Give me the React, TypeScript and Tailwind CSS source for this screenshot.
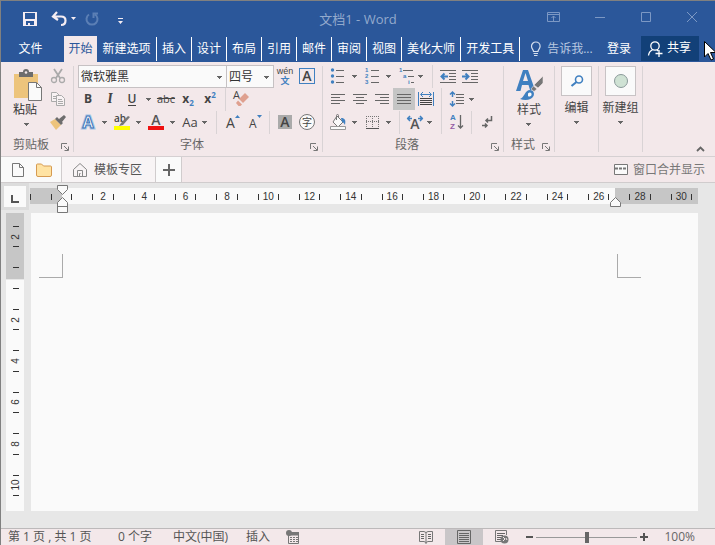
import type { ReactNode } from "react";
import clsx from "clsx";

const menuTabs = ["插入", "设计", "布局", "引用", "邮件", "审阅", "视图", "美化大师", "开发工具"];

const horizontalMarks = ["", "2", "4", "6", "8", "10", "12", "14", "16", "18", "20", "22", "24", "26", "28", "30"];
const verticalMarks = ["2", "", "2", "4", "6", "8", "10"];

const BLUE = "#4080c0";
const GRAY = "#666666";
const SMALL_FONT = "Liberation Sans";

function Lines({ rows, color = GRAY }: { rows: [number, number, number][]; color?: string }) {
  return (
    <>
      {rows.map(([x, y, w], i) => (
        <rect key={i} x={x} y={y} width={w} height="1" fill={color} />
      ))}
    </>
  );
}

function Svg({ children, w = 16, h = 16 }: { children: ReactNode; w?: number; h?: number }) {
  return (
    <svg width={w} height={h} viewBox={`0 0 ${w} ${h}`} fill="none" className="shrink-0 overflow-visible" aria-hidden="true">
      {children}
    </svg>
  );
}

function Tool({ label, active, children }: { label: string; active?: boolean; children: ReactNode }) {
  return (
    <button
      type="button"
      aria-label={label}
      className={clsx("flex h-[22px] w-[22px] shrink-0 items-center justify-center leading-4", active && "bg-[#c5c5c5]")}
    >
      {children}
    </button>
  );
}

function Caret({ label, narrow }: { label: string; narrow?: boolean }) {
  return (
    <button
      type="button"
      aria-label={label}
      className={clsx("flex h-[22px] shrink-0 items-center justify-center", narrow ? "w-2" : "w-3")}
    >
      <CaretIcon />
    </button>
  );
}

function CaretIcon() {
  return (
    <Svg w={6} h={4}>
      <path d="M0 1h5v1H4v1H3v1H2V3H1V2H0z" fill={GRAY} />
    </Svg>
  );
}

function Divider({ className }: { className?: string }) {
  return <span className={clsx("h-[23px] w-px shrink-0 bg-[#d9d3d5]", className)} />;
}

function GroupDivider() {
  return <div className="mt-1 mb-1 w-px shrink-0 bg-[#d9d3d5]" />;
}

function Row({ className, children }: { className?: string; children: ReactNode }) {
  return <div className={clsx("flex h-[23px] items-start", className)}>{children}</div>;
}

function GroupLabel({ text }: { text: string }) {
  return (
    <div className="flex h-[22px] items-center pr-1 text-[#666]">
      <span className="flex-1 text-center">{text}</span>
      <button type="button" aria-label={`${text}选项`} className="mt-1">
        <Svg w={8} h={8}>
          <path d="M.5 6V.5H6M3 3l4 4M7.5 3.5v4h-4" stroke="#777" />
        </Svg>
      </button>
    </div>
  );
}

function TitleBar() {
  return (
    <div className="grid h-[35px] grid-cols-[1fr_auto_1fr] items-center">
      <div className="flex items-center pl-[21px]">
        <button type="button" aria-label="保存">
          <Svg>
            <path d="M1 1h14v14H1z" fill="#f5edf3" />
            <path d="M3 2h10v6H3zM4 10h8v4H8v-2H6v2H4z" fill="#2b579a" />
          </Svg>
        </button>
        <button type="button" aria-label="撤消" className="ml-[13px]">
          <Svg>
            <path d="M6 1L2 5.5 7 9M2.5 5.5H10c3.500 0 4.500 2.300 4.500 4 0 2.500-1.500 4.500-4.500 4.500" stroke="#f5edf3" strokeWidth="2.200" />
          </Svg>
        </button>
        <button type="button" aria-label="撤消列表" className="ml-1">
          <Svg w={5} h={3}>
            <path d="M0 0h5L2.500 3z" fill="#f5edf3" />
          </Svg>
        </button>
        <button type="button" aria-label="恢复" className="ml-2">
          <Svg>
            <path d="M5 3.500A5.500 5.500 0 1 0 11 3.500M9.500 7V2.500H14" stroke="#5b7fb5" strokeWidth="2" />
          </Svg>
        </button>
        <button type="button" aria-label="自定义快速访问工具栏" className="mt-1 ml-[18px]">
          <Svg w={5} h={6}>
            <path d="M0 0h5v1H0zM0 3h5L2.500 6z" fill="#f5edf3" />
          </Svg>
        </button>
      </div>
      <h1 className="pt-0.5 text-[13px] text-[#93aacd]">文档1 - Word</h1>
      <div className="flex items-center justify-end gap-[30px] pr-[15px] pb-1">
        <button type="button" aria-label="功能区显示选项">
          <Svg>
            <path d="M1.500 3.500h12v9h-12zM1.500 5.500h12M7.500 12V7M5.500 9l2-2 2 2" stroke="#7c98c4" />
          </Svg>
        </button>
        <button type="button" aria-label="最小化">
          <Svg>
            <path d="M3 8.500h10" stroke="#7c98c4" />
          </Svg>
        </button>
        <button type="button" aria-label="最大化">
          <Svg>
            <path d="M3.500 3.500h9v9h-9z" stroke="#7c98c4" />
          </Svg>
        </button>
        <button type="button" aria-label="关闭">
          <Svg>
            <path d="M3 3l10 10M13 3L3 13" stroke="#7c98c4" />
          </Svg>
        </button>
      </div>
    </div>
  );
}

function MenuBar() {
  return (
    <div className="flex h-[26px] whitespace-nowrap text-white">
      <button type="button" className="w-[63px] shrink-0 pr-1">文件</button>
      <nav className="flex shrink-0">
        <button type="button" className="w-[33px] bg-[#f3e8ea] text-[#2b579a]">开始</button>
        <button type="button" className="my-px w-[60px] border-r border-white">新建选项</button>
        {menuTabs.map((tab) => (
          <button key={tab} type="button" className="my-px border-r border-white px-[5px]">
            {tab}
          </button>
        ))}
      </nav>
      <label className="ml-[9px] flex min-w-0 items-center gap-1 text-[#b9c9e1]">
        <Svg w={14}>
          <path
            d="M4.500 10.500C4.500 8.500 2.500 8 2.500 5.300a4.300 4.300 0 0 1 8.600 0C11.100 8 9 8.500 9 10.500zM4.500 12.500H9M5 14.500h3.500"
            stroke="#d5dfee"
            strokeWidth="1.200"
          />
        </Svg>
        <input
          type="text"
          aria-label="操作说明搜索"
          placeholder="告诉我..."
          className="w-[54px] min-w-0 bg-transparent outline-none placeholder:text-[#b9c9e1]"
        />
      </label>
      <div className="ml-auto flex shrink-0">
        <button type="button" className="w-11">登录</button>
        <button type="button" className="mr-4 mb-px flex w-[58px] items-center gap-[3px] bg-[#124078] pl-1.5">
          <Svg w={17} h={17}>
            <circle cx="8" cy="6" r="4.200" stroke="white" strokeWidth="1.300" />
            <path d="M1.500 15.500c.4-3 2-5 4-5.700M10 10l1 1M8.500 13.500h7M12 10v7" stroke="white" strokeWidth="1.300" />
          </Svg>
          <span className="pb-0.5">共享</span>
        </button>
      </div>
    </div>
  );
}

function ClipboardGroup() {
  return (
    <section className="flex w-[72px] shrink-0 flex-col pt-[3px]">
      <div className="flex h-[69px] justify-between pr-1 pl-3">
        <button type="button" className="flex flex-col items-start pt-1">
          <Svg w={30} h={33}>
            <path d="M1 5h24v24H1z" fill="#edc47c" />
            <path d="M6 3h4a3 3 0 0 1 6 0h4v5H6z" fill="#6d6d6d" />
            <circle cx="13" cy="3.500" r="1.300" fill="#f3e8ea" />
            <path d="M15.500 13.500h8l5 5v13h-13z" fill="#fafafa" stroke="#777" />
            <path d="M23.500 13.500v5h5" stroke="#777" />
          </Svg>
          <span className="leading-4 text-[#333]">粘贴</span>
          <span className="mt-1 ml-[11px]">
            <CaretIcon />
          </span>
        </button>
        <div className="flex flex-col gap-px">
          <Tool label="剪切">
            <Svg>
              <path d="M4 1l6 9M12 1L6 10" stroke="#aaa" strokeWidth="1.800" />
              <circle cx="4" cy="12" r="2.500" stroke="#aaa" strokeWidth="1.300" />
              <circle cx="12" cy="12" r="2.500" stroke="#aaa" strokeWidth="1.300" />
            </Svg>
          </Tool>
          <Tool label="复制">
            <Svg>
              <path d="M1.500 1.500h5l3 3v6h-8z" fill="#f8f2f3" stroke="#aaa" />
              <path d="M6.500 4.500h5l3 3v7h-8z" fill="#f8f2f3" stroke="#aaa" />
              <Lines rows={[[3, 5, 3], [3, 7, 3], [8, 8, 4], [8, 10, 5], [8, 12, 5]]} color="#aaa" />
            </Svg>
          </Tool>
          <Tool label="格式刷">
            <Svg>
              <path d="M0 8l5-3 6 6-5 5z" fill="#edc47c" />
              <path d="M5 5l2-2 6 6-2 2zM9 5l5-4 2 2-4 5z" fill="#6d6d6d" />
            </Svg>
          </Tool>
        </div>
      </div>
      <GroupLabel text="剪贴板" />
    </section>
  );
}

function SelectBox({ label, value, className }: { label: string; value: string; className: string }) {
  return (
    <label className={clsx("relative flex h-[23px] items-center", className)}>
      <select
        aria-label={label}
        className="h-full w-full appearance-none border border-[#c6c1c3] bg-[#fafafa] pl-0.5 text-[#333] outline-none"
      >
        <option>{value}</option>
      </select>
      <span className="pointer-events-none absolute right-1">
        <CaretIcon />
      </span>
    </label>
  );
}

function FontGroup() {
  return (
    <section className="flex w-[248px] shrink-0 flex-col pt-[3px] text-[#444]">
      <Row className="pl-1">
        <SelectBox label="字体" value="微软雅黑" className="w-[149px]" />
        <SelectBox label="字号" value="四号" className="-ml-px w-[48px]" />
        <Tool label="拼音指南">
          <Svg w={18} h={18}>
            <text x="9" y="7" fontSize="9" fontFamily={SMALL_FONT} textAnchor="middle" fill="#444">wén</text>
            <text x="9" y="17" fontSize="9" fontWeight="700" textAnchor="middle" fill={BLUE}>文</text>
          </Svg>
        </Tool>
        <Tool label="字符边框">
          <span className="flex h-4 w-4 items-center justify-center border border-[#4080c0] text-sm font-semibold">A</span>
        </Tool>
      </Row>
      <Row className="pl-[3px]">
        <Tool label="加粗"><b>B</b></Tool>
        <Tool label="倾斜"><i className="font-serif text-sm font-semibold">I</i></Tool>
        <Tool label="下划线"><span className="border-b border-[#444] font-semibold leading-3">U</span></Tool>
        <Caret label="下划线样式" />
        <Tool label="删除线"><s className="text-[11px]">abc</s></Tool>
        <Tool label="下标">
          <b>x</b><span className="mt-2 text-[8px] font-bold text-[#4080c0]">2</span>
        </Tool>
        <Tool label="上标">
          <b>x</b><span className="mb-2 text-[8px] font-bold text-[#4080c0]">2</span>
        </Tool>
        <Divider className="mx-1" />
        <Tool label="清除所有格式">
          <Svg>
            <text x="0" y="8" fontSize="11" fill="#444">A</text>
            <path d="M6 8l6-6 4 4-6 6z" fill="#dfa08f" />
            <path d="M5 9.500l4 4-1.500 1.500h-2L3 12z" fill="#dfa08f" />
          </Svg>
        </Tool>
      </Row>
      <Row className="pl-[3px]">
        <Tool label="文本效果">
          <Svg w={18} h={18}>
            <text x="9" y="15" fontSize="16" fontWeight="700" textAnchor="middle" fill="#fafafa" stroke="#a9c6e6" strokeWidth="3">A</text>
            <text x="9" y="15" fontSize="16" fontWeight="700" textAnchor="middle" fill="#fafafa" stroke="#3b74b8" strokeWidth="1">A</text>
          </Svg>
        </Tool>
        <Caret label="文本效果列表" />
        <Tool label="突出显示">
          <Svg>
            <text x="0" y="8" fontSize="10" fontWeight="600" fill="#444">ab</text>
            <path d="M14 2l2 1-7 8-4 1 2-3z" fill="#777" />
            <path d="M0 12h16v4H0z" fill="#ffff00" />
          </Svg>
        </Tool>
        <Caret label="突出显示颜色" />
        <Tool label="字体颜色">
          <Svg>
            <text x="8" y="11" fontSize="14" fontWeight="600" textAnchor="middle" fill="#555">A</text>
            <path d="M0 12h16v4H0z" fill="#ee1111" />
          </Svg>
        </Tool>
        <Caret label="字体颜色列表" />
        <Tool label="更改大小写"><span className="text-[13px]">Aa</span></Tool>
        <Caret label="大小写列表" narrow />
        <Divider className="mr-[5px] ml-[7px]" />
        <Tool label="增大字号">
          <Svg>
            <text x="1" y="14" fontSize="14" fontWeight="500" fill="#444">A</text>
            <path d="M10 4l2.500-3L15 4z" fill={BLUE} />
          </Svg>
        </Tool>
        <Tool label="缩小字号">
          <Svg>
            <text x="2" y="14" fontSize="12" fontWeight="500" fill="#444">A</text>
            <path d="M10 1h5l-2.500 3z" fill={BLUE} />
          </Svg>
        </Tool>
        <Divider className="mr-1 ml-[3px]" />
        <Tool label="字符底纹">
          <span className="flex h-3.5 w-3.5 items-center justify-center bg-[#aaa] text-sm font-semibold">A</span>
        </Tool>
        <Tool label="带圈字符">
          <span className="flex h-4 w-4 items-center justify-center rounded-full border border-[#777] bg-[#fafafa] text-[10px]">字</span>
        </Tool>
      </Row>
      <GroupLabel text="字体" />
    </section>
  );
}

function ParagraphGroup() {
  return (
    <section className="flex w-[180px] shrink-0 flex-col pt-[3px]">
      <Row className="pl-1">
        <Tool label="项目符号">
          <Svg>
            {[2, 8, 14].map((y) => (
              <circle key={y} cx="2.500" cy={y} r="1.700" fill={BLUE} />
            ))}
            <Lines rows={[[6, 2, 8], [6, 8, 8], [6, 14, 8]]} />
          </Svg>
        </Tool>
        <Caret label="项目符号库" />
        <Tool label="编号">
          <Svg>
            {["1", "2", "3"].map((n, i) => (
              <text key={n} x="1" y={4 + i * 6} fontSize="6" fontFamily={SMALL_FONT} fontWeight="700" fill={BLUE}>{n}</text>
            ))}
            <Lines rows={[[7, 2, 8], [7, 8, 8], [7, 14, 8]]} />
          </Svg>
        </Tool>
        <Caret label="编号库" />
        <Tool label="多级列表">
          <Svg>
            <text x="1" y="4" fontSize="6" fontFamily={SMALL_FONT} fontWeight="700" fill={BLUE}>1</text>
            <text x="5" y="10" fontSize="6" fontFamily={SMALL_FONT} fontWeight="700" fill={BLUE}>a</text>
            <text x="10" y="16" fontSize="6" fontFamily={SMALL_FONT} fontWeight="700" fill={BLUE}>i</text>
            <Lines rows={[[5, 2, 10], [10, 8, 6], [13, 14, 3]]} />
          </Svg>
        </Tool>
        <Caret label="多级列表库" narrow />
        <Divider className="mr-1 ml-[7px]" />
        <Tool label="减少缩进量">
          <Svg>
            <Lines rows={[[0, 2, 16], [9, 5, 7], [9, 8, 7], [9, 11, 7], [0, 14, 16]]} />
            <path d="M8 8.500H2M4.500 5.500l-3 3 3 3" stroke={BLUE} strokeWidth="2" />
          </Svg>
        </Tool>
        <Tool label="增加缩进量">
          <Svg>
            <Lines rows={[[0, 2, 16], [9, 5, 7], [9, 8, 7], [9, 11, 7], [0, 14, 16]]} />
            <path d="M0 8.500h6M3.500 5.500l3 3-3 3" stroke={BLUE} strokeWidth="2" />
          </Svg>
        </Tool>
      </Row>
      <Row className="pl-1">
        <Tool label="左对齐">
          <Svg>
            <Lines rows={[[1, 3, 14], [1, 6, 9], [1, 9, 14], [1, 12, 9]]} />
          </Svg>
        </Tool>
        <Tool label="居中">
          <Svg>
            <Lines rows={[[1, 3, 14], [4, 6, 8], [1, 9, 14], [4, 12, 8]]} />
          </Svg>
        </Tool>
        <Tool label="右对齐">
          <Svg>
            <Lines rows={[[1, 3, 14], [6, 6, 9], [1, 9, 14], [6, 12, 9]]} />
          </Svg>
        </Tool>
        <Tool label="两端对齐" active>
          <Svg>
            <Lines rows={[[1, 3, 14], [1, 6, 14], [1, 9, 14], [1, 12, 14]]} />
          </Svg>
        </Tool>
        <Tool label="分散对齐">
          <Svg>
            <path d="M.5 1v14M15.500 1v14M3 3.500h10M5 1L2.500 3.500 5 6M11 1l2.500 2.500L11 6" stroke={BLUE} />
            <Lines rows={[[2, 7, 12], [2, 9, 12], [2, 11, 12], [2, 13, 12]]} color="#444" />
          </Svg>
        </Tool>
        <Divider className="mx-1" />
        <Tool label="行和段落间距">
          <Svg>
            <path d="M3.500 1v5M3.500 10v5M1 3.500L3.500 1 6 3.500M1 12.500L3.500 15 6 12.500" stroke={BLUE} strokeWidth="1.500" />
            <Lines rows={[[7, 3, 8], [7, 6, 8], [7, 9, 8], [7, 12, 8]]} />
          </Svg>
        </Tool>
        <Caret label="行距列表" narrow />
      </Row>
      <Row className="pl-1">
        <Tool label="底纹">
          <Svg>
            <path d="M7 2l6 6-5 5-5-5z" fill="#fafafa" stroke="#777" />
            <path d="M6.500 6V1.500a1 1 0 0 1 2 0V4" stroke="#777" />
            <path d="M11 4c4 0 5 2 4 7-1-2-2-3-3-3z" fill={BLUE} />
            <path d="M.5 12.500h15v3H.5z" fill="#fafafa" stroke="#999" />
          </Svg>
        </Tool>
        <Caret label="底纹颜色" />
        <Tool label="边框">
          <Svg>
            <path d="M2 2.500h13M2 7.500h13M2.500 2v11M8.500 2v11M14.500 2v11" stroke="#777" strokeDasharray="1 1" />
            <path d="M2 14.500h13" stroke="#555" />
          </Svg>
        </Tool>
        <Caret label="边框列表" />
        <Divider className="mx-1" />
        <Tool label="中文版式">
          <Svg>
            <text x="8" y="15" fontSize="14" fontWeight="600" textAnchor="middle" fill="#555">A</text>
            <path d="M0 4.500h5M3 2L.7 4.500 3 7M11 4.500h5M13 2l2.300 2.500L13 7" stroke={BLUE} strokeWidth="1.500" />
          </Svg>
        </Tool>
        <Caret label="中文版式列表" narrow />
        <Divider className="mr-1 ml-[7px]" />
        <Tool label="排序">
          <Svg>
            <text x="1" y="6" fontSize="8" fontFamily={SMALL_FONT} fontWeight="700" fill={BLUE}>A</text>
            <text x="1" y="15" fontSize="8" fontFamily={SMALL_FONT} fontWeight="700" fill="#955ba5">Z</text>
            <path d="M11.500 1v13M9 11.500l2.500 2.500 2.500-2.500" stroke={GRAY} strokeWidth="1.300" />
          </Svg>
        </Tool>
        <Divider className="mr-1 ml-[3px]" />
        <Tool label="显示编辑标记">
          <Svg>
            <path d="M12.500 2v4.500H7M9 4.500l-2 2 2 2M3 11.500h5M6 9.500l2 2-2 2" stroke={GRAY} strokeWidth="1.500" />
          </Svg>
        </Tool>
      </Row>
      <GroupLabel text="段落" />
    </section>
  );
}

function StyleGroup() {
  return (
    <section className="flex w-[50px] shrink-0 flex-col pt-[3px]">
      <button type="button" className="flex h-[69px] flex-col items-center pt-1">
        <Svg w={28} h={33}>
          <path d="M1 22L8 1h5l7 20h-5l-1.500-5H7l-1.500 6zM8 12h5l-2.500-8z" fill={BLUE} fillRule="evenodd" />
          <path d="M28 7v7l-5 5-4-3zM18.500 17l3.500 3-3 2.500-3-2.500z" fill="#777" stroke="#f3e8ea" strokeWidth=".6" />
          <path d="M5 30c4-1 5-9 10-9 3 0 5 3 3.500 6-2 4.500-9 4.500-13.500 3z" fill={BLUE} />
          <path d="M13 24.500c2-2 4-.5 3.500 1.500-.5 1.500-2.500 2-3.500 1z" fill="#fafafa" />
        </Svg>
        <span className="leading-4 text-[#444]">样式</span>
        <span className="mt-1">
          <CaretIcon />
        </span>
      </button>
      <GroupLabel text="样式" />
    </section>
  );
}

function CollapsedGroup({ text, children }: { text: string; children: ReactNode }) {
  return (
    <section className="w-[43px] shrink-0 pt-1">
      <button type="button" className="flex w-full flex-col items-center text-[#444]">
        <span className="flex h-[30px] w-[31px] items-center justify-center border border-[#c8c3c5] bg-[#fafafa]">
          {children}
        </span>
        <span className="mt-1 leading-4 whitespace-nowrap">{text}</span>
        <span className="mt-1">
          <CaretIcon />
        </span>
      </button>
    </section>
  );
}

function Ribbon() {
  return (
    <div className="flex h-[95px] border-b border-[#d5d0d2] bg-[#f3e8ea]">
      <ClipboardGroup />
      <GroupDivider />
      <FontGroup />
      <GroupDivider />
      <ParagraphGroup />
      <GroupDivider />
      <StyleGroup />
      <GroupDivider />
      <CollapsedGroup text="编辑">
        <Svg>
          <circle cx="10" cy="6.500" r="3.500" stroke={BLUE} strokeWidth="1.600" />
          <path d="M7.500 9L2.500 13" stroke={BLUE} strokeWidth="2.200" />
        </Svg>
      </CollapsedGroup>
      <GroupDivider />
      <CollapsedGroup text="新建组">
        <Svg>
          <circle cx="8" cy="8" r="6.500" fill="#cfe2d4" stroke="#8b9a9a" />
        </Svg>
      </CollapsedGroup>
      <GroupDivider />
      <button type="button" aria-label="折叠功能区" className="mr-2.5 mb-1 ml-auto self-end">
        <Svg w={9} h={6}>
          <path d="M1 5l3.500-3.500L8 5" stroke={GRAY} strokeWidth="1.800" />
        </Svg>
      </button>
    </div>
  );
}

function DocumentTabs() {
  return (
    <div className="flex h-[26px] items-stretch border-b border-[#d0cccd] bg-[#f3e8ea] text-[#555]">
      <div className="flex items-center gap-2.5 border-r border-[#d0cccd] bg-[#fafafa] pr-[9px] pl-[9px]">
        <button type="button" aria-label="新建">
          <Svg>
            <path d="M2.500 1.500h7l4 4v9h-11zM9.500 1.500v4h4" stroke="#777" />
          </Svg>
        </button>
        <button type="button" aria-label="打开">
          <Svg>
            <path d="M.5 3a1 1 0 0 1 1-1h4l2 2h7a1 1 0 0 1 1 1v8a1.500 1.500 0 0 1-1.500 1.500h-12A1.500 1.500 0 0 1 .5 13z" fill="#ffe3a3" stroke="#d69b52" />
          </Svg>
        </button>
      </div>
      <button type="button" className="flex items-center gap-1.5 border-r border-[#d0cccd] bg-[#f8f4f5] pr-[13px] pl-2.5">
        <Svg>
          <path d="M1.500 7.500L8 1.500l6.500 6v7h-13zM5.500 14.500v-6h5v6M7.500 14.500v-3h1" stroke="#888" />
        </Svg>
        模板专区
      </button>
      <button type="button" aria-label="新建标签" className="flex w-[26px] items-center justify-center border-r border-[#d0cccd] bg-[#fafafa]">
        <Svg w={12} h={12}>
          <path d="M6 0v12M0 6h12" stroke="#666" strokeWidth="2" />
        </Svg>
      </button>
      <button type="button" className="mr-2.5 ml-auto flex items-center gap-1 text-[#777]">
        <Svg w={15} h={12}>
          <path d="M.5.5h13v10H.5z" fill="#fafafa" stroke="#777" />
          <path d="M1 4.500h12" stroke="#777" strokeWidth="2" strokeDasharray="3 1" />
        </Svg>
        窗口合并显示
      </button>
    </div>
  );
}

function HorizontalRuler() {
  return (
    <div className="relative mt-[5px] mr-[17px] ml-px h-4 flex-1">
      <div className="flex h-full">
        <div className="w-8 bg-[#c6c6c6]" />
        <div className="flex-1 bg-[#fafafa]" />
        <div className="w-[83px] bg-[#c6c6c6]" />
      </div>
      <div className="absolute inset-0 overflow-hidden">
        <div className="-mr-1 flex h-full items-center pt-px pl-[11px]">
          {horizontalMarks.map((mark, i) => (
            <div key={i} className="flex flex-1 items-center justify-between px-2.5">
              <span className="h-1.5 w-px bg-[#333]" />
              <span>{mark}</span>
              <span className="h-1.5 w-px bg-[#333]" />
            </div>
          ))}
        </div>
        <span className="absolute top-1.5 left-0 h-1.5 w-px bg-[#333]" />
      </div>
      <div className="absolute -top-[3px] left-[27px]">
        <Svg w={11} h={28}>
          <path d="M.5.5h10v4l-5 5-5-5zM5.500 12.500l5 5v10H.5v-10zM.5 21.500h10" fill="#fafafa" stroke="#777" />
        </Svg>
      </div>
      <div className="absolute top-[9px] right-[77px]">
        <Svg w={11} h={10}>
          <path d="M5.500.5l5 5v4H.5v-4z" fill="#fafafa" stroke="#777" />
        </Svg>
      </div>
    </div>
  );
}

function VerticalRuler() {
  return (
    <div className="relative mr-[7px] ml-[5px] flex w-[18px] flex-col">
      <div className="h-[66px] bg-[#c6c6c6]" />
      <div className="mt-px flex-1 bg-[#fafafa]" />
      <div className="absolute inset-0 flex flex-col pt-[3px] pb-[5px] pl-0.5">
        {verticalMarks.map((mark, i) => (
          <div key={i} className="flex flex-1 flex-col items-center justify-between py-2.5">
            <span className="h-px w-1.5 bg-[#333]" />
            <span className="flex h-0 -rotate-90 items-center">{mark}</span>
            <span className="h-px w-1.5 bg-[#333]" />
          </div>
        ))}
      </div>
    </div>
  );
}

function Editor() {
  return (
    <main className="flex min-h-0 flex-1 flex-col bg-[#e7e7e7] pb-[17px] font-['Liberation_Sans',sans-serif] text-[10px] leading-3 text-[#333]">
      <div className="flex h-[30px]">
        <button type="button" aria-label="制表符" className="flex h-[27px] w-7 items-center justify-center border-[3px] border-[#dcdcdc] bg-[#fafafa] pt-1">
          <Svg w={8} h={8}>
            <path d="M1 0v7h7" stroke="#555" strokeWidth="2" />
          </Svg>
        </button>
        <HorizontalRuler />
      </div>
      <div className="flex min-h-0 flex-1">
        <VerticalRuler />
        <div className="mr-[17px] flex flex-1 items-start justify-between bg-[#fafafa] pt-[41px] pr-[57px] pl-2">
          <span className="h-6 w-6 border-r border-b border-[#aaa]" />
          <span className="h-6 w-6 border-b border-l border-[#aaa]" />
        </div>
      </div>
    </main>
  );
}

function StatusBar() {
  return (
    <footer className="flex h-[17px] shrink-0 items-center border-t border-[#bcb9ba] bg-[#f3e8ea] pr-5 pl-[7px] text-[#555]">
      <div className="flex items-center whitespace-nowrap">
        <span className="w-[110px]">第 1 页 , 共 1 页</span>
        <span className="w-[55px]">0 个字</span>
        <span className="w-[73px]">中文(中国)</span>
        <span className="w-10">插入</span>
        <button type="button" aria-label="宏录制">
          <Svg w={14} h={14}>
            <path d="M2.500 3.500h10v10h-10zM3 5h10" stroke="#777" />
            <path d="M5 2h8v3H5z" fill="#777" />
            <path d="M4 7.500h8M4 9.500h8M4 11.500h8" stroke="#777" strokeDasharray="2 1" />
            <circle cx="3" cy="3" r="3" fill="#777" />
          </Svg>
        </button>
      </div>
      <div className="ml-auto flex h-full items-center">
        <button type="button" aria-label="阅读视图" className="flex w-[26px] justify-start">
          <Svg w={14} h={14}>
            <path d="M.5 1.500H5l2 1 2-1h4.500v10H9l-2 1-2-1H.5zM7 2v12" stroke="#777" />
            <Lines rows={[[2, 4, 3], [2, 6, 3], [2, 8, 3], [9, 4, 3], [9, 6, 3], [9, 8, 3]]} />
          </Svg>
        </button>
        <button type="button" aria-label="页面视图" className="flex h-full w-[38px] items-center justify-center bg-[#c9c6c8]">
          <Svg w={14} h={14}>
            <path d="M.5.5h13v13H.5z" stroke="#666" />
            <Lines rows={[[2, 3, 10], [2, 5, 10], [2, 7, 10], [2, 9, 10], [2, 11, 10]]} />
          </Svg>
        </button>
        <button type="button" aria-label="Web 版式视图" className="flex w-[43px] justify-center pr-1.5">
          <Svg w={14} h={14}>
            <path d="M6 11.500H.5v-11h11V5" stroke="#777" />
            <Lines rows={[[2, 3, 8], [2, 5, 6], [2, 7, 4], [2, 9, 4]]} />
            <circle cx="9.500" cy="9.500" r="4" fill="#777" />
            <path d="M8 7l2 2-2 2M11 8l1 2" stroke="#f3e8ea" />
          </Svg>
        </button>
        <button type="button" aria-label="缩小">
          <Svg w={7} h={8}>
            <path d="M0 4h7" stroke="#555" strokeWidth="2" />
          </Svg>
        </button>
        <input
          type="range"
          aria-label="显示比例"
          min="0"
          max="100"
          defaultValue="50"
          className="mx-[3px] h-3 w-[101px] appearance-none bg-transparent [&::-webkit-slider-runnable-track]:h-px [&::-webkit-slider-runnable-track]:bg-[#999] [&::-webkit-slider-thumb]:-mt-[5px] [&::-webkit-slider-thumb]:h-[11px] [&::-webkit-slider-thumb]:w-1 [&::-webkit-slider-thumb]:appearance-none [&::-webkit-slider-thumb]:bg-[#666]"
        />
        <button type="button" aria-label="放大">
          <Svg w={8} h={8}>
            <path d="M0 4h8M4 0v8" stroke="#555" strokeWidth="2" />
          </Svg>
        </button>
        <span className="ml-4 text-[#666]">100%</span>
      </div>
    </footer>
  );
}

export default function App() {
  return (
    <div className="relative flex h-screen min-w-0 flex-col overflow-hidden border-t border-l border-[#808080] font-['Open_Sans','Noto_Sans_CJK_SC',sans-serif] text-xs">
      <header className="shrink-0 bg-[#2b579a]">
        <TitleBar />
        <MenuBar />
        <Ribbon />
        <DocumentTabs />
      </header>
      <Editor />
      <StatusBar />
      <div className="pointer-events-none absolute top-10 -right-px">
        <Svg w={12} h={20}>
          <path d="M.5.500v15.500l3.500-3.500 3 6.500 2.500-1-3-6.500H12z" fill="white" stroke="black" />
        </Svg>
      </div>
    </div>
  );
}
